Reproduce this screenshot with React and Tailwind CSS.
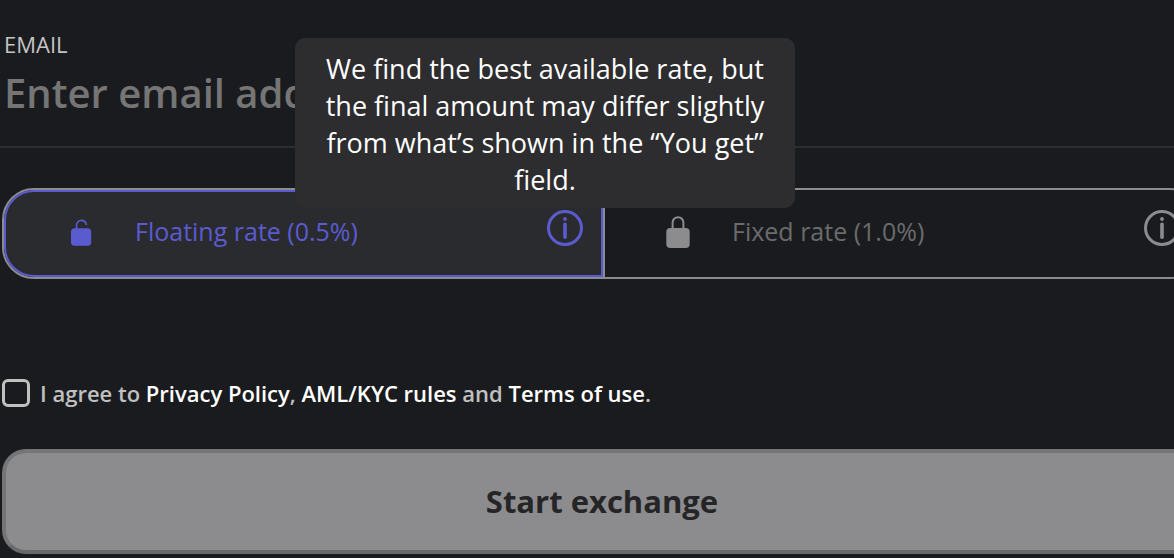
import { useState } from 'react';

const InfoIcon = () => (
  <svg viewBox="0 0 36 36" className="w-9 h-9" fill="none" stroke="currentColor" aria-hidden="true">
    <circle cx="18" cy="18" r="16.5" strokeWidth="3" />
    <path d="M18 14.2v13" strokeWidth="3.6" strokeLinecap="round" />
    <circle cx="18" cy="9" r="1.9" fill="currentColor" stroke="none" />
  </svg>
);

const UnlockedIcon = () => (
  <svg viewBox="0 0 24 32" className="w-6 h-8" fill="none" stroke="currentColor" aria-hidden="true">
    <rect x="2" y="12.2" width="20.2" height="17.6" rx="3.6" fill="currentColor" stroke="none" />
    <path d="M7.6 13.5V8.7a4.9 4.9 0 0 1 9.4-1.2l.5 1.4" strokeWidth="1.6" />
  </svg>
);

const LockedIcon = () => (
  <svg viewBox="0 0 24 32" className="w-6 h-8" fill="none" stroke="currentColor" aria-hidden="true">
    <rect x="0.3" y="12" width="23.4" height="20" rx="4" fill="currentColor" stroke="none" />
    <path d="M6.6 13V6.6a5.4 5.4 0 0 1 10.8 0V13" strokeWidth="2" />
  </svg>
);

const RATES = [
  { id: 'floating', label: 'Floating rate (0.5%)', Icon: UnlockedIcon },
  { id: 'fixed', label: 'Fixed rate (1.0%)', Icon: LockedIcon },
];

const RateOption = ({ rate, selected, onSelect, onInfo }) => (
  <div
    className={`flex flex-1 ${rate.id === 'floating' ? 'border-r-2 border-[#8c8c8e] rounded-l-[30px]' : '-ml-1 rounded-r-[30px]'}`}
  >
    <div
      className={`flex flex-1 items-center rounded-[inherit] border-2 pr-4.5 pb-1 ${
        selected ? 'border-[#5b5bd0] bg-[#2a2b2f] text-[#5b5bd0]' : 'border-transparent text-[#8c8c8e]'
      }`}
    >
      <label className="flex flex-1 items-center gap-[42px] pl-[63px] cursor-pointer">
        <input
          type="radio"
          name="rate"
          value={rate.id}
          checked={selected}
          onChange={() => onSelect(rate.id)}
          className="sr-only"
        />
        <rate.Icon />
        <span className={`text-[25px] ${selected ? '' : 'text-[#6a6b6d]'}`}>{rate.label}</span>
      </label>
      <button type="button" onClick={onInfo} aria-label={`About ${rate.id} rate`} className="mb-2">
        <InfoIcon />
      </button>
    </div>
  </div>
);

const App = () => {
  const [email, setEmail] = useState('');
  const [rate, setRate] = useState('floating');
  const [agreed, setAgreed] = useState(false);
  const [showInfo, setShowInfo] = useState(true);

  return (
    <div className="min-h-screen overflow-hidden bg-[#1a1b1e] font-['Open_Sans',sans-serif] font-medium">
      <form onSubmit={(e) => e.preventDefault()} className="-mr-7 pt-8">

        {/* EMAIL */}
        <div className="border-b-2 border-[#2d2e30] pl-1 pb-[18px]">
          <label htmlFor="email" className="block text-[22px] leading-6 text-[#c4c4c4]">EMAIL</label>
          <input
            id="email"
            type="email"
            value={email}
            onChange={(e) => setEmail(e.target.value)}
            placeholder="Enter email address"
            className="block w-full h-[72px] bg-transparent text-[40px] font-semibold text-white placeholder:text-[#757575] outline-none"
          />
        </div>

        {/* RATE */}
        <div className="relative ml-0.5 mt-10">
          <div className="flex h-[91px] rounded-[32px] border-2 border-[#8c8c8e]">
            {RATES.map((item) => (
              <RateOption
                key={item.id}
                rate={item}
                selected={rate === item.id}
                onSelect={setRate}
                onInfo={() => setShowInfo(!showInfo)}
              />
            ))}
          </div>
          {showInfo && (
            <div
              role="tooltip"
              className="absolute bottom-[71px] left-[293px] w-[500px] rounded-[10px] bg-[#2d2d2f] px-7 pt-3 pb-2.5 text-center text-[27px] leading-[37px] text-white"
            >
              We find the best available rate, but the final amount may differ slightly from what’s shown in the “You get” field.
            </div>
          )}
        </div>

        {/* AGREEMENT */}
        <div className="mt-24 ml-0.5 flex items-center gap-2.5 text-[22px] leading-9 font-semibold text-[#c0c0c0]">
          <input
            id="agree"
            type="checkbox"
            checked={agreed}
            onChange={(e) => setAgreed(e.target.checked)}
            className="size-7 appearance-none rounded-md border-3 border-[#c0c0c0] checked:bg-[#5b5bd0]"
          />
          <p>
            <label htmlFor="agree">I agree to </label>
            <a href="#privacy" className="text-white">Privacy Policy</a>,{' '}
            <a href="#aml" className="text-white">AML/KYC rules</a> and{' '}
            <a href="#terms" className="text-white">Terms of use</a>.
          </p>
        </div>

        <div className="mt-[38px] ml-0.5 flex">
          <button
            type="submit"
            className="h-[105px] flex-1 rounded-3xl border-4 border-[#757577] border-b-[#69696b] bg-[#8c8c8e] text-[31px] font-bold text-[#252527]"
          >
            Start exchange
          </button>
        </div>
      </form>
    </div>
  );
};

export default App;
